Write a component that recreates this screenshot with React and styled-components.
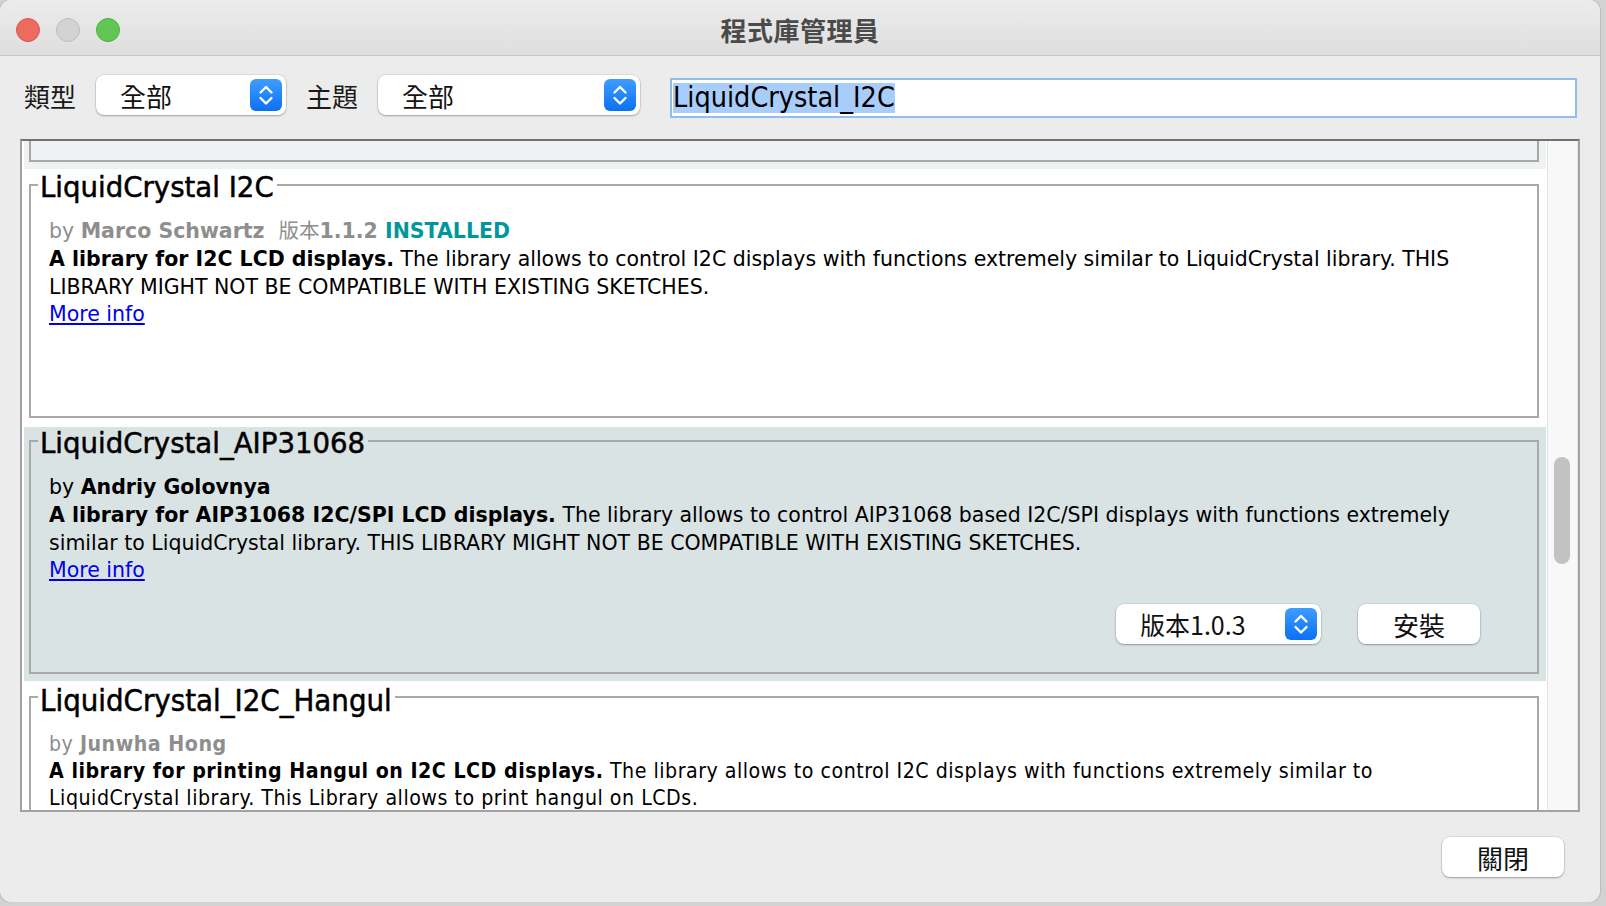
import React from 'react';
import styled, { createGlobalStyle } from 'styled-components';

const GlobalStyle = createGlobalStyle`
  html, body {
    margin: 0;
    padding: 0;
    background: #d2d2d2;
  }
  body {
    font-family: "DejaVu Sans", "Noto Sans CJK TC", sans-serif;
    color: #000;
  }
`;

const CJK = `"Noto Sans CJK TC", "DejaVu Sans", sans-serif`;
const NARROW = `"DejaVu Sans Condensed", "DejaVu Sans", "Noto Sans CJK TC", sans-serif`;

const libraries = [
  {
    id: 'stub',
    name: '',
    bg: '#eef2f2',
  },
  {
    id: 'i2c',
    name: 'LiquidCrystal I2C',
    author: 'Marco Schwartz',
    version: '1.1.2',
    installed: true,
    muted: true,
    lead: 'A library for I2C LCD displays.',
    text: ' The library allows to control I2C displays with functions extremely similar to LiquidCrystal library. THIS LIBRARY MIGHT NOT BE COMPATIBLE WITH EXISTING SKETCHES.',
    bg: '#ffffff',
  },
  {
    id: 'aip',
    name: 'LiquidCrystal_AIP31068',
    author: 'Andriy Golovnya',
    lead: 'A library for AIP31068 I2C/SPI LCD displays.',
    text: ' The library allows to control AIP31068 based I2C/SPI displays with functions extremely similar to LiquidCrystal library. THIS LIBRARY MIGHT NOT BE COMPATIBLE WITH EXISTING SKETCHES.',
    bg: '#dae3e4',
    install: '1.0.3',
  },
  {
    id: 'hangul',
    name: 'LiquidCrystal_I2C_Hangul',
    author: 'Junwha Hong',
    muted: true,
    narrow: true,
    lead: 'A library for printing Hangul on I2C LCD displays.',
    text: ' The library allows to control I2C displays with functions extremely similar to LiquidCrystal library. This Library allows to print hangul on LCDs.',
    bg: '#ffffff',
  },
];

const Chevrons = () => (
  <svg width="32" height="32" viewBox="0 0 32 32" fill="none" stroke="#fff" strokeWidth="2.4" strokeLinecap="round" strokeLinejoin="round">
    <path d="M10.5 13.5 L16 8 L21.5 13.5" />
    <path d="M10.5 19 L16 24.5 L21.5 19" />
  </svg>
);

export default function App() {
  return (
    <>
      <GlobalStyle />
      <Window>
        <TitleBar>
          <Lights>
            <Light $color="#ee6a5f" $edge="#d6584d" />
            <Light $color="#d3d3d3" $edge="#bdbdbd" />
            <Light $color="#62c655" $edge="#4fae43" />
          </Lights>
          <WindowTitle>程式庫管理員</WindowTitle>
          <span />
        </TitleBar>

        <Toolbar>
          <FieldLabel>類型</FieldLabel>
          <Select $width={190}>
            <span>全部</span>
            <Stepper><Chevrons /></Stepper>
          </Select>
          <FieldLabel>主題</FieldLabel>
          <Select $width={262}>
            <span>全部</span>
            <Stepper><Chevrons /></Stepper>
          </Select>
          <SearchField>
            <Selection>LiquidCrystal_I2C</Selection>
          </SearchField>
        </Toolbar>

        <ListPane>
          <Viewport>
            {libraries.map((lib, i) => (
              <Row key={lib.id} $bg={lib.bg} $shift={i === 0 ? -226 : 0}>
                <Card>
                  {lib.name && <CardTitle $narrow={lib.narrow}>{lib.name}</CardTitle>}
                  {lib.author && (
                    <CardBody $narrow={lib.narrow}>
                      <Meta $muted={lib.muted}>
                        by <b>{lib.author}</b>
                        {lib.version && (
                          <Version>版本<b>{lib.version}</b></Version>
                        )}
                        {lib.installed && <Installed> INSTALLED</Installed>}
                      </Meta>
                      <Description>
                        <b>{lib.lead}</b>{lib.text}
                      </Description>
                      <MoreInfo href="#">More info</MoreInfo>
                    </CardBody>
                  )}
                  {lib.install && (
                    <Actions>
                      <Select $width={205} $size={25}>
                        <span>版本{lib.install}</span>
                        <Stepper><Chevrons /></Stepper>
                      </Select>
                      <PushButton>安裝</PushButton>
                    </Actions>
                  )}
                </Card>
              </Row>
            ))}
          </Viewport>
          <Scrollbar>
            <Thumb />
          </Scrollbar>
        </ListPane>

        <Footer>
          <PushButton>關閉</PushButton>
        </Footer>
      </Window>
    </>
  );
}

const Window = styled.div`
  width: 1600px;
  height: 902px;
  background: #ececec;
  border-radius: 11px;
  overflow: hidden;
  display: flex;
  flex-direction: column;
  box-shadow: 0 0 0 1px #bcbcbc;
`;

const TitleBar = styled.div`
  height: 56px;
  box-sizing: border-box;
  padding: 4px 16px 0;
  display: grid;
  grid-template-columns: 1fr auto 1fr;
  align-items: center;
  background: linear-gradient(#ececec, #dedede);
  border-bottom: 1px solid #c7c7c7;
`;

const Lights = styled.div`
  display: flex;
  gap: 16px;
`;

const Light = styled.span`
  width: 24px;
  height: 24px;
  box-sizing: border-box;
  border-radius: 50%;
  background: ${(p) => p.$color};
  border: 1px solid ${(p) => p.$edge};
`;

const WindowTitle = styled.div`
  font-family: ${CJK};
  font-size: 26px;
  font-weight: 600;
  color: #4a4a4a;
  letter-spacing: 0.5px;
`;

const Toolbar = styled.div`
  height: 83px;
  box-sizing: border-box;
  padding: 0 23px 5px 24px;
  display: flex;
  align-items: center;
  gap: 20px;
`;

const FieldLabel = styled.span`
  font-family: ${CJK};
  font-size: 26px;
  color: #1b1b1b;
`;

const Select = styled.div`
  width: ${(p) => p.$width}px;
  height: 40px;
  box-sizing: border-box;
  padding: 0 4px 0 24px;
  display: flex;
  align-items: center;
  justify-content: space-between;
  background: #fff;
  border-radius: 8px;
  box-shadow: 0 1px 2px rgba(0, 0, 0, 0.3), 0 0 0 0.5px rgba(0, 0, 0, 0.12);
  font-family: ${CJK};
  font-size: ${(p) => p.$size || 26}px;
  color: #111;
`;

const Stepper = styled.span`
  width: 32px;
  height: 32px;
  border-radius: 6px;
  display: flex;
  background: linear-gradient(#3f9dff, #0b70f4);
`;

const SearchField = styled.div`
  flex: 1;
  margin: 6px 0 0 10px;
  height: 40px;
  box-sizing: border-box;
  border: 2px solid #94bcea;
  background: #fff;
  display: flex;
  align-items: center;
  padding-left: 1px;
`;

const Selection = styled.span`
  background: #a9cdfa;
  font-family: ${NARROW};
  font-stretch: condensed;
  font-size: 28.5px;
  line-height: 30px;
  color: #000;
`;

const ListPane = styled.div`
  margin: 0 20px;
  height: 673px;
  box-sizing: border-box;
  border: 2px solid #a2a2a2;
  border-top-color: #717171;
  background: #fff;
  display: flex;
  overflow: hidden;
`;

const Viewport = styled.div`
  flex: 1;
  overflow: hidden;
  padding: 0 1px 0 2px;
  display: flex;
  flex-direction: column;
  gap: 2px;
`;

const Row = styled.div`
  flex-shrink: 0;
  height: 254px;
  box-sizing: border-box;
  margin-top: ${(p) => p.$shift}px;
  padding: 0 7px 7px 5px;
  background: ${(p) => p.$bg};
`;

const Card = styled.fieldset`
  margin: 0;
  height: 247px;
  min-width: 0;
  box-sizing: border-box;
  border: 2px solid #a9a9a9;
  padding: 0 0 0 7px;
`;

const CardTitle = styled.legend`
  padding: 6px 3px 0 2px;
  line-height: 22px;
  font-family: ${(p) => (p.$narrow ? NARROW : `"DejaVu Sans", sans-serif`)};
  font-stretch: ${(p) => (p.$narrow ? 'condensed' : 'normal')};
  font-size: ${(p) => (p.$narrow ? 30.8 : 27.6)}px;
  -webkit-text-stroke: 0.5px #000;
  color: #000;
`;

const CardBody = styled.div`
  padding: 19px 57px 0 11px;
  font-family: ${(p) => (p.$narrow ? NARROW : `"DejaVu Sans", "Noto Sans CJK TC", sans-serif`)};
  font-stretch: ${(p) => (p.$narrow ? 'condensed' : 'normal')};
  font-size: ${(p) => (p.$narrow ? 21.2 : 20.5)}px;
  letter-spacing: ${(p) => (p.$narrow ? 0.5 : 0)}px;
  line-height: ${(p) => (p.$narrow ? 27 : 27.8)}px;
`;

const Meta = styled.div`
  color: ${(p) => (p.$muted ? '#8e8e8e' : '#000')};
`;

const Version = styled.span`
  margin-left: 14px;
`;

const Installed = styled.b`
  color: #00979c;
`;

const Description = styled.div``;

const MoreInfo = styled.a`
  color: #0000ee;
  text-decoration: underline;
`;

const Actions = styled.div`
  margin-top: 19px;
  padding-right: 57px;
  display: flex;
  justify-content: flex-end;
  align-items: center;
  gap: 37px;
`;

const PushButton = styled.button`
  width: 122px;
  height: 40px;
  border: none;
  border-radius: 8px;
  background: #fff;
  box-shadow: 0 1px 2px rgba(0, 0, 0, 0.3), 0 0 0 0.5px rgba(0, 0, 0, 0.12);
  font-family: ${CJK};
  font-size: 26px;
  color: #111;
  padding: 0;
`;

const Scrollbar = styled.div`
  width: 31px;
  flex-shrink: 0;
  box-sizing: border-box;
  padding: 316px 0 0 6px;
  background: #f8f8f8;
  border-left: 1px solid #e4e4e4;
  border-right: 1px solid #e8e8e8;
`;

const Thumb = styled.div`
  width: 16px;
  height: 107px;
  border-radius: 8px;
  background: #c2c2c2;
`;

const Footer = styled.div`
  flex: 1;
  display: flex;
  justify-content: flex-end;
  align-items: center;
  padding-right: 36px;
`;
